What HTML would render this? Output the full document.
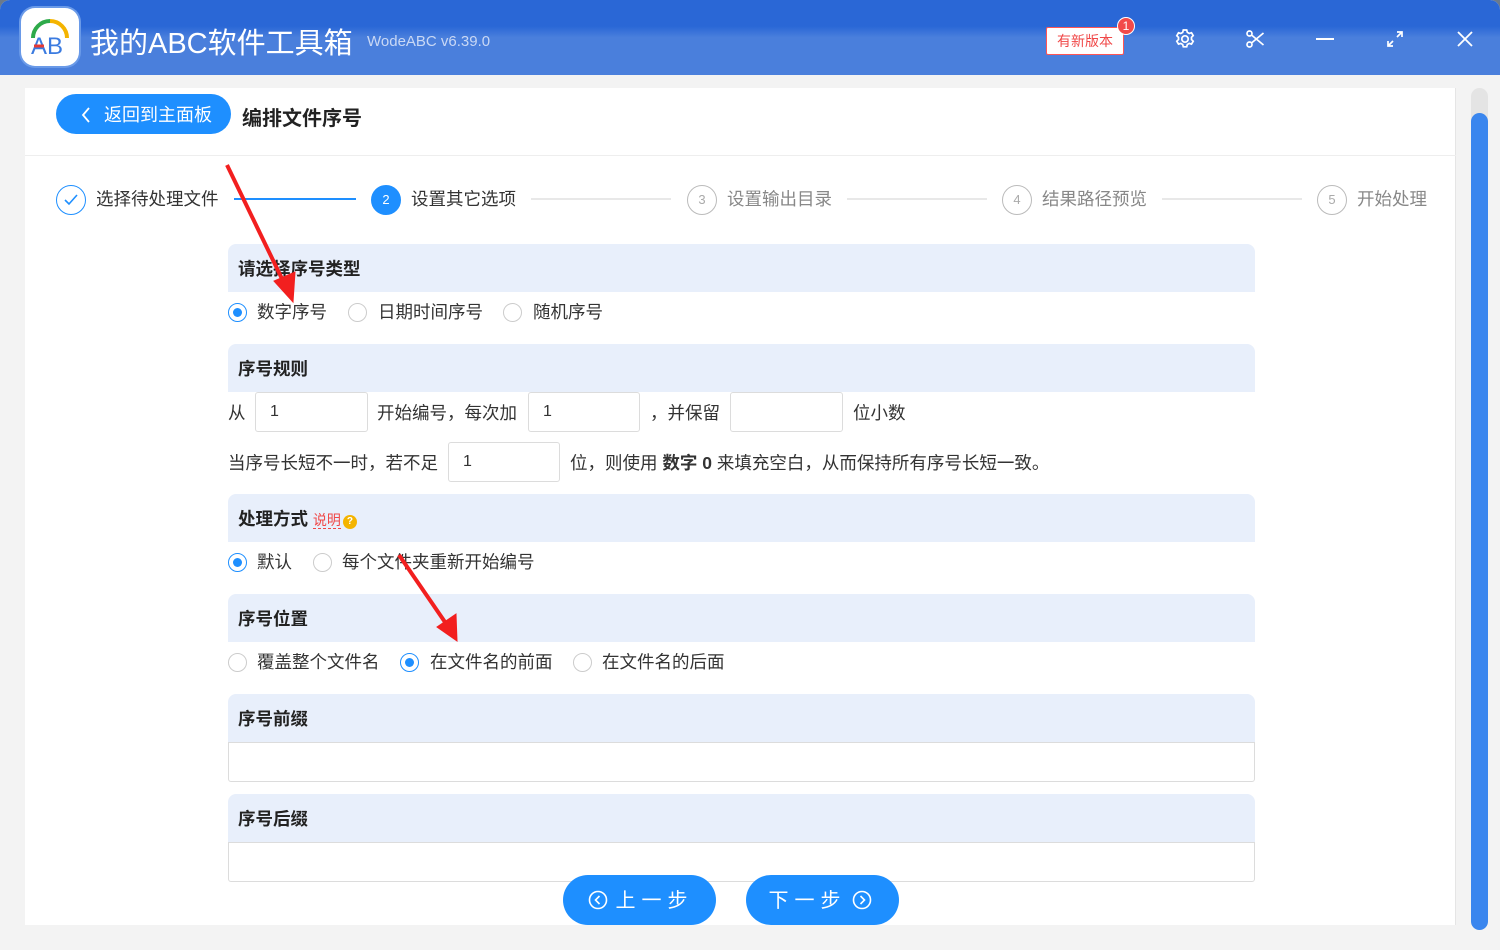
<!DOCTYPE html>
<html><head><meta charset="utf-8"><style>
*{box-sizing:border-box;margin:0;padding:0}
body{width:1500px;height:950px;overflow:hidden;background:#6b7a8c;font-family:"Liberation Sans","Noto Sans CJK SC",sans-serif;color:#333;position:relative}
.a{position:absolute}
.win{left:0;top:0;width:1500px;height:950px;background:#f3f3f3;border-radius:10px 10px 0 0;overflow:hidden}
.tb{left:0;top:0;width:1500px;height:75px;background:linear-gradient(#2a67d6,#2a67d6 35%,#4a7fdc 50%,#4a7fdc)}
.card{left:25px;top:88px;width:1431px;height:837px;background:#fff;border-right:1px solid #e5e5e5}
.sec{left:228px;width:1027px;height:48px;background:#e8effb;border-radius:8px 8px 0 0;font-weight:bold;font-size:17.5px;color:#222;padding:12px 0 0 10px}
.t{font-size:17.5px;color:#333;white-space:nowrap}
.r{width:19px;height:19px;border:1px solid #ccc;border-radius:50%;background:#fff}
.r.on{border-color:#1e8fff}
.r.on::after{content:"";position:absolute;left:4px;top:4px;width:9px;height:9px;border-radius:50%;background:#1e8fff}
.in{height:40px;border:1px solid #dcdcdc;border-radius:3px;background:#fff;font-size:16px;padding:10px 0 0 14px}
.step{width:30px;height:30px;border-radius:50%;border:1px solid #bbb;color:#aaa;font-size:13px;text-align:center;line-height:28px;background:#fff}
.line{height:2px;background:#e8e8e8}
.btn{height:50px;width:153px;border-radius:25px;background:#1e8fff;color:#fff;font-size:20px;text-align:center;line-height:50px;letter-spacing:6px}
</style></head><body>
<div class="a win">
<div class="a tb"></div>
<div class="a" style="left:21px;top:8px;width:58px;height:58px;border-radius:14px;background:#fff;box-shadow:0 0 0 2px #6a9ae8"></div>
<svg class="a" style="left:21px;top:8px" width="58" height="58" viewBox="0 0 58 58"><path d="M12 30 A17 17 0 0 1 29 13" stroke="#2eaa4a" stroke-width="4" fill="none"/><path d="M29 13 A17 17 0 0 1 46 30" stroke="#f4b400" stroke-width="4" fill="none"/><text x="10" y="46" font-size="24" font-family="Liberation Sans" fill="#3b7be0">AB</text><line x1="13" y1="38" x2="23" y2="38" stroke="#e53935" stroke-width="3"/></svg>
<div class="a" style="left:90px;top:20px;font-size:29px;color:#fff">我的ABC软件工具箱</div>
<div class="a" style="left:367px;top:33px;font-size:15px;color:#c9d8f5">WodeABC v6.39.0</div>
<div class="a" style="left:1046px;top:27px;width:78px;height:28px;background:#fff;border:1px solid #f55;border-radius:2px;color:#f04848;font-size:14px;text-align:center;line-height:26px">有新版本</div>
<div class="a" style="left:1117px;top:17px;width:18px;height:18px;border-radius:50%;background:#f24a4a;border:1px solid #fff;color:#fff;font-size:12px;text-align:center;line-height:16px">1</div>
<svg class="a" style="left:1174px;top:28px" width="22" height="22" viewBox="0 0 22 22" fill="none" stroke="#fff" stroke-width="1.7"><circle cx="11" cy="11" r="3.2"/><path d="M9.3 2h3.4l.6 2.3 1.9 1.1 2.3-.7 1.7 2.9-1.7 1.7v2.2l1.7 1.7-1.7 2.9-2.3-.7-1.9 1.1-.6 2.3H9.3l-.6-2.3-1.9-1.1-2.3.7-1.7-2.9 1.7-1.7V9.4L2.8 7.7l1.7-2.9 2.3.7 1.9-1.1z"/></svg>
<svg class="a" style="left:1245px;top:29px" width="20" height="20" viewBox="0 0 20 20" fill="none" stroke="#fff" stroke-width="1.7"><circle cx="4.5" cy="4.5" r="2.5"/><circle cx="4.5" cy="15.5" r="2.5"/><path d="M6.5 6l12 10M6.5 14l12-10"/></svg>
<div class="a" style="left:1316px;top:38px;width:18px;height:2px;background:#fff"></div>
<svg class="a" style="left:1386px;top:30px" width="18" height="18" viewBox="0 0 18 18" fill="none" stroke="#fff" stroke-width="1.7"><path d="M2 16l5-5M16 2l-5 5M2 11v5h5M16 7V2h-5"/></svg>
<svg class="a" style="left:1456px;top:30px" width="18" height="18" viewBox="0 0 18 18" stroke="#fff" stroke-width="1.8"><path d="M2 2l14 14M16 2L2 16"/></svg>

<div class="a card"></div>
<div class="a" style="left:25px;top:155px;width:1431px;height:1px;background:#eee"></div>
<div class="a" style="left:1471px;top:88px;width:17px;height:842px;border-radius:9px;background:#e4e4e4"></div>
<div class="a" style="left:1471px;top:113px;width:17px;height:817px;border-radius:9px;background:#3a86ee"></div>

<div class="a" style="left:56px;top:94px;width:175px;height:40px;border-radius:20px;background:#1e8fff;color:#fff;font-size:18px;line-height:42px;padding-left:48px">返回到主面板</div>
<svg class="a" style="left:80px;top:106px" width="12" height="18" viewBox="0 0 12 18" fill="none" stroke="#fff" stroke-width="1.8"><path d="M9 2L3 9l6 7"/></svg>
<div class="a" style="left:242px;top:102px;font-size:20px;font-weight:bold;color:#222">编排文件序号</div>

<div class="a step" style="left:56px;top:185px;border-color:#1e8fff"></div>
<svg class="a" style="left:62px;top:192px" width="18" height="16" viewBox="0 0 18 16" fill="none" stroke="#1e8fff" stroke-width="1.6"><path d="M3 8l4 4 8-9"/></svg>
<div class="a t" style="left:96px;top:186px">选择待处理文件</div>
<div class="a line" style="left:234px;top:198px;width:122px;background:#1e8fff"></div>
<div class="a step" style="left:371px;top:185px;background:#1e8fff;border-color:#1e8fff;color:#fff">2</div>
<div class="a t" style="left:411px;top:186px">设置其它选项</div>
<div class="a line" style="left:531px;top:198px;width:140px"></div>
<div class="a step" style="left:687px;top:185px">3</div>
<div class="a t" style="left:727px;top:186px;color:#888">设置输出目录</div>
<div class="a line" style="left:847px;top:198px;width:140px"></div>
<div class="a step" style="left:1002px;top:185px">4</div>
<div class="a t" style="left:1042px;top:186px;color:#888">结果路径预览</div>
<div class="a line" style="left:1162px;top:198px;width:140px"></div>
<div class="a step" style="left:1317px;top:185px">5</div>
<div class="a t" style="left:1357px;top:186px;color:#888">开始处理</div>

<div class="a sec" style="top:244px">请选择序号类型</div>
<div class="a r on" style="left:228px;top:303px"></div><div class="a t" style="left:257px;top:299px">数字序号</div>
<div class="a r" style="left:348px;top:303px"></div><div class="a t" style="left:378px;top:299px">日期时间序号</div>
<div class="a r" style="left:503px;top:303px"></div><div class="a t" style="left:533px;top:299px">随机序号</div>

<div class="a sec" style="top:344px">序号规则</div>
<div class="a t" style="left:228px;top:400px">从</div>
<div class="a in" style="left:255px;top:392px;width:113px">1</div>
<div class="a t" style="left:377px;top:400px">开始编号，每次加</div>
<div class="a in" style="left:528px;top:392px;width:112px">1</div>
<div class="a t" style="left:650px;top:400px">，并保留</div>
<div class="a in" style="left:730px;top:392px;width:113px"></div>
<div class="a t" style="left:853px;top:400px">位小数</div>
<div class="a t" style="left:228px;top:450px">当序号长短不一时，若不足</div>
<div class="a in" style="left:448px;top:442px;width:112px">1</div>
<div class="a t" style="left:570px;top:450px">位，则使用 <b>数字 0</b> 来填充空白，从而保持所有序号长短一致。</div>

<div class="a sec" style="top:494px">处理方式 <span style="font-weight:normal;font-size:14px;color:#f04848;border-bottom:1px dashed #f04848">说明</span><span style="display:inline-block;width:14px;height:14px;border-radius:50%;background:#f4b400;color:#fff;font-size:10px;text-align:center;line-height:14px;margin-left:2px;vertical-align:1px">?</span></div>
<div class="a r on" style="left:228px;top:553px"></div><div class="a t" style="left:257px;top:549px">默认</div>
<div class="a r" style="left:313px;top:553px"></div><div class="a t" style="left:342px;top:549px">每个文件夹重新开始编号</div>

<div class="a sec" style="top:594px">序号位置</div>
<div class="a r" style="left:228px;top:653px"></div><div class="a t" style="left:257px;top:649px">覆盖整个文件名</div>
<div class="a r on" style="left:400px;top:653px"></div><div class="a t" style="left:430px;top:649px">在文件名的前面</div>
<div class="a r" style="left:573px;top:653px"></div><div class="a t" style="left:602px;top:649px">在文件名的后面</div>

<div class="a sec" style="top:694px">序号前缀</div>
<div class="a in" style="left:228px;top:742px;width:1027px;border-radius:0 0 3px 3px"></div>
<div class="a sec" style="top:794px">序号后缀</div>
<div class="a in" style="left:228px;top:842px;width:1027px;border-radius:0 0 3px 3px"></div>

<div class="a btn" style="left:563px;top:875px;padding-left:30px;line-height:52px">上一步</div>
<svg class="a" style="left:588px;top:890px" width="20" height="20" viewBox="0 0 20 20" fill="none" stroke="#fff" stroke-width="1.6"><circle cx="10" cy="10" r="8.5"/><path d="M11.5 6l-4 4 4 4"/></svg>
<div class="a btn" style="left:746px;top:875px;padding-right:30px;line-height:52px">下一步</div>
<svg class="a" style="left:852px;top:890px" width="20" height="20" viewBox="0 0 20 20" fill="none" stroke="#fff" stroke-width="1.6"><circle cx="10" cy="10" r="8.5"/><path d="M8.5 6l4 4-4 4"/></svg>

<svg class="a" style="left:0;top:0" width="1500" height="950"><g fill="#f21f1f" stroke="#f21f1f"><line x1="227" y1="165" x2="285" y2="285" stroke-width="4"/><polygon points="293,302 274,281 295,272" /><line x1="399" y1="555" x2="447" y2="625" stroke-width="4"/><polygon points="457,641 437,627 456,614"/></g></svg>
</div>
</body></html>
